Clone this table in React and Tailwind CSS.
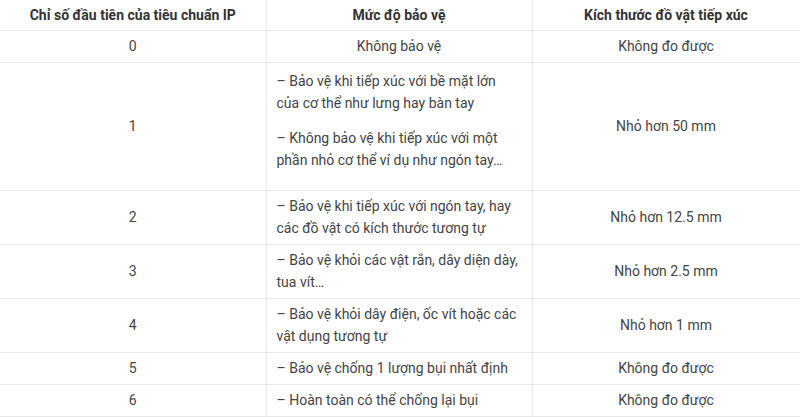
import React from "react";

const rows = [
  { n: "0", m: [["Không bảo vệ"]], center: true, k: "Không đo được", h: "h-[32px]" },
  {
    n: "1",
    m: [
      ["– Bảo vệ khi tiếp xúc với bề mặt lớn", "của cơ thể như lưng hay bàn tay"],
      ["– Không bảo vệ khi tiếp xúc với một", "phần nhỏ cơ thể ví dụ như ngón tay…"],
    ],
    paras: true,
    k: "Nhỏ hơn 50 mm",
    h: "h-[128px]",
  },
  { n: "2", m: [["– Bảo vệ khi tiếp xúc với ngón tay, hay", "các đồ vật có kích thước tương tự"]], k: "Nhỏ hơn 12.5 mm", h: "h-[54px]" },
  { n: "3", m: [["– Bảo vệ khỏi các vật rắn, dây diện dày,", "tua vít…"]], k: "Nhỏ hơn 2.5 mm", h: "h-[54px]" },
  { n: "4", m: [["– Bảo vệ khỏi dây điện, ốc vít hoặc các", "vật dụng tương tự"]], k: "Nhỏ hơn 1 mm", h: "h-[54px]" },
  { n: "5", m: [["– Bảo vệ chống 1 lượng bụi nhất định"]], k: "Không đo được", h: "h-[32px]" },
  { n: "6", m: [["– Hoàn toàn có thể chống lại bụi"]], k: "Không đo được", h: "h-[32px]" },
];

export default function App() {
  return (
    <div className="w-[800px] h-[417px] bg-white overflow-hidden" style={{ fontFamily: "Roboto, 'Noto Sans', sans-serif" }}>
      <table className="w-[800px] table-fixed border-collapse text-[14px] leading-[22px] text-[#444]">
        <colgroup>
          <col className="w-[266px]" />
          <col className="w-[266px]" />
          <col className="w-[268px]" />
        </colgroup>
        <thead>
          <tr className="h-[30px]">
            <th className="border-r border-b border-[#e8e8e8] px-[10px] font-bold text-[#333] text-center align-middle">Chỉ số đầu tiên của tiêu chuẩn IP</th>
            <th className="border-r border-b border-[#e8e8e8] px-[10px] font-bold text-[#333] text-center align-middle">Mức độ bảo vệ</th>
            <th className="border-r border-b border-[#e8e8e8] px-[10px] font-bold text-[#333] text-center align-middle">Kích thước đồ vật tiếp xúc</th>
          </tr>
        </thead>
        <tbody>
          {rows.map((r) => (
            <tr key={r.n} className={r.h}>
              <td className="border-r border-b border-[#e8e8e8] px-[10px] text-center align-middle">{r.n}</td>
              <td className={"border-r border-b border-[#e8e8e8] px-[10px] align-middle " + (r.center ? "text-center" : "text-left")}>
                {r.paras ? (
                  <div className="pt-[1px]">
                    {r.m.map((p, i) => (
                      <p key={i} className="mb-[13px]">
                        {p.map((l, j) => (
                          <span key={j} className="block whitespace-nowrap">{l}</span>
                        ))}
                      </p>
                    ))}
                  </div>
                ) : (
                  r.m.map((p, i) => (
                    <div key={i}>
                      {p.map((l, j) => (
                        <span key={j} className="block whitespace-nowrap">{l}</span>
                      ))}
                    </div>
                  ))
                )}
              </td>
              <td className="border-r border-b border-[#e8e8e8] px-[10px] text-center align-middle">{r.k}</td>
            </tr>
          ))}
        </tbody>
      </table>
    </div>
  );
}
